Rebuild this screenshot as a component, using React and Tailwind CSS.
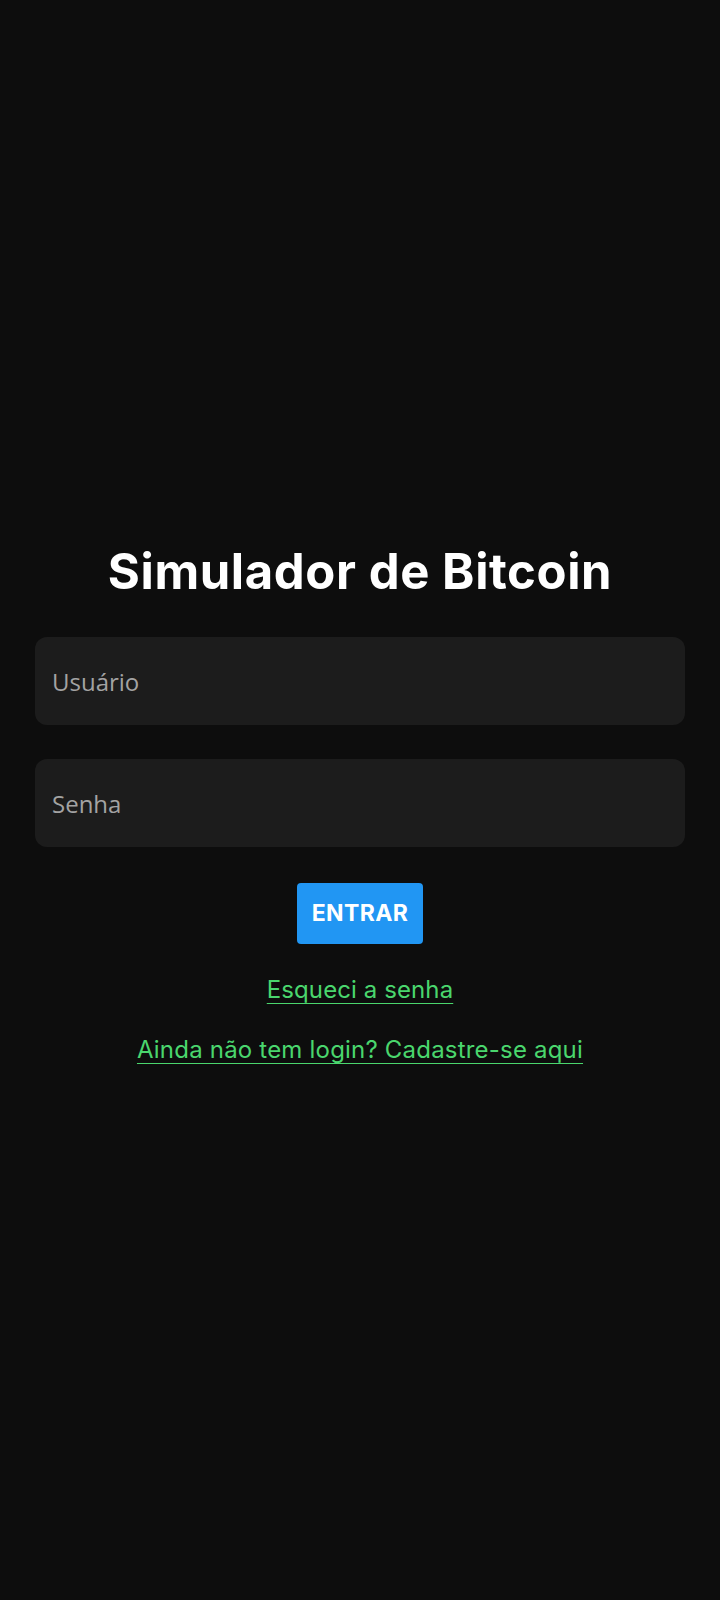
export default function App() {
  return (
    <div className="min-h-screen w-full bg-[#0d0d0d] flex flex-col items-center justify-center px-[35px] pt-[4px]" style={{ fontFamily: "Inter, 'Noto Sans', sans-serif" }}>
      <h1 className="text-white font-bold text-[49px] leading-[66px] tracking-[0.6px] mb-[32px]">Simulador de Bitcoin</h1>
      <div className="w-full flex flex-col gap-[34px]">
        <input
          type="text"
          placeholder="Usuário"
          className="w-full h-[88px] rounded-[12px] bg-[#1c1c1c] px-[17px] text-[24px] text-white placeholder:text-[#a3a3a3] outline-none"
          style={{ fontFamily: "'Open Sans', sans-serif" }}
        />
        <input
          type="password"
          placeholder="Senha"
          className="w-full h-[88px] rounded-[12px] bg-[#1c1c1c] px-[17px] text-[24px] text-white placeholder:text-[#a3a3a3] outline-none"
          style={{ fontFamily: "'Open Sans', sans-serif" }}
        />
      </div>
      <button className="mt-[36px] h-[61px] w-[126px] rounded-[4px] bg-[#2196f3] text-white font-bold text-[23px] tracking-[0.4px]">ENTRAR</button>
      <a href="#" className="mt-[31px] text-[#4ad66d] text-[24px] leading-[30px] tracking-[0.1px] underline underline-offset-[5px] decoration-[1px]">Esqueci a senha</a>
      <a href="#" className="mt-[30px] text-[#4ad66d] text-[24px] leading-[30px] tracking-[0.2px] underline underline-offset-[5px] decoration-[1px]">Ainda não tem login? Cadastre-se aqui</a>
    </div>
  );
}
